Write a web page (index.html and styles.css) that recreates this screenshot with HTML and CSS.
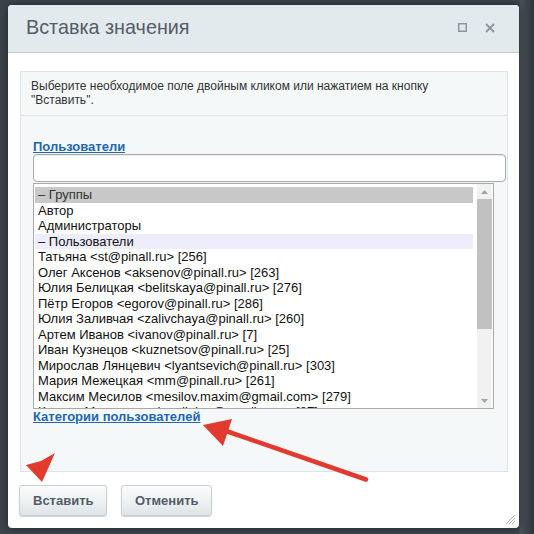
FILE: index.html
```html
<!DOCTYPE html>
<html lang="ru">
<head>
<meta charset="utf-8">
<title>Вставка значения</title>
<link rel="stylesheet" href="styles.css">
</head>
<body>
<div class="page">
  <div class="dialog">
    <div class="head">
      <span class="title">Вставка значения</span>
      <span class="tools">
        <svg class="tool" width="9" height="9" viewBox="0 0 9 9"><rect x="0.75" y="0.75" width="7.5" height="7.5" fill="none" stroke="#8c969e" stroke-width="1.5"/></svg>
        <svg class="tool" width="10" height="10" viewBox="0 0 10 10"><path d="M1 1L9 9M9 1L1 9" stroke="#8c969e" stroke-width="1.8"/></svg>
      </span>
    </div>
    <div class="body">
      <div class="panel">
        <div class="hint">Выберите необходимое поле двойным кликом или нажатием на кнопку<br>"Вставить".</div>
        <div class="fields">
          <a class="link" href="#">Пользователи</a>
          <input class="search" type="text">
          <div class="listbox">
            <div class="opts">
              <div class="opt sel">– Группы</div>
              <div class="opt">Автор</div>
              <div class="opt">Администраторы</div>
              <div class="opt grp">– Пользователи</div>
              <div class="opt">Татьяна &lt;st@pinall.ru&gt; [256]</div>
              <div class="opt">Олег Аксенов &lt;aksenov@pinall.ru&gt; [263]</div>
              <div class="opt">Юлия Белицкая &lt;belitskaya@pinall.ru&gt; [276]</div>
              <div class="opt">Пётр Егоров &lt;egorov@pinall.ru&gt; [286]</div>
              <div class="opt">Юлия Заливчая &lt;zalivchaya@pinall.ru&gt; [260]</div>
              <div class="opt">Артем Иванов &lt;ivanov@pinall.ru&gt; [7]</div>
              <div class="opt">Иван Кузнецов &lt;kuznetsov@pinall.ru&gt; [25]</div>
              <div class="opt">Мирослав Лянцевич &lt;lyantsevich@pinall.ru&gt; [303]</div>
              <div class="opt">Мария Межецкая &lt;mm@pinall.ru&gt; [261]</div>
              <div class="opt">Максим Месилов &lt;mesilov.maxim@gmail.com&gt; [279]</div>
              <div class="opt">Ксения Малинина &lt;kmalinina@gmail.com&gt; [87]</div>
            </div>
            <div class="sbar">
              <div class="sbtn"><svg width="7" height="4" viewBox="0 0 7 4"><path d="M0 4L3.5 0L7 4Z" fill="#a3a3a3"/></svg></div>
              <div class="strack"><div class="thumb"></div></div>
              <div class="sbtn"><svg width="7" height="4" viewBox="0 0 7 4"><path d="M0 0L3.5 4L7 0Z" fill="#a3a3a3"/></svg></div>
            </div>
          </div>
          <a class="link" href="#">Категории пользователей</a>
        </div>
      </div>
      <div class="buttons">
        <button class="btn">Вставить</button>
        <button class="btn">Отменить</button>
      </div>
    </div>
    <svg class="grip" width="11" height="11" viewBox="0 0 11 11"><path d="M10 1L1 10M10 4L4 10M10 7L7 10" stroke="#b0b6ba" stroke-width="1"/></svg>
  </div>
  <svg class="arrows" width="534" height="534" viewBox="0 0 534 534">
    <path d="M366 479.5L226 431" stroke="#e23a2f" stroke-width="4.5" stroke-linecap="round"/>
    <path d="M203 425L232 419L228 431L223 446Z" fill="#e23a2f"/>
    <path d="M42 482L26 465L41 461L55 453Z" fill="#e23a2f"/>
  </svg>
</div>
</body>
</html>
```
FILE: styles.css
```css
* { box-sizing: border-box; }
html, body { margin: 0; padding: 0; }
body {
  width: 534px;
  height: 534px;
  overflow: hidden;
  font-family: "Liberation Sans", Arial, sans-serif;
  background: linear-gradient(to right, #3d444c 0, #3d444c 519px, #4b535c 520px, #2f353b 534px);
}
.page {
  position: relative;
  width: 534px;
  height: 534px;
  padding: 5px 0 0 8px;
}
.dialog {
  position: relative;
  width: 511px;
  height: 523px;
  background: #fff;
  border-radius: 4px;
  box-shadow: 0 0 10px rgba(0, 0, 0, 0.45);
  display: flex;
  flex-direction: column;
}
.head {
  height: 48px;
  background: #e3eaed;
  border-bottom: 1px solid #c1cacf;
  border-radius: 4px 4px 0 0;
  display: flex;
  align-items: center;
  justify-content: space-between;
  padding: 0 24px 0 18px;
}
.title {
  font-size: 19.8px;
  color: #535c69;
  margin-top: -2px;
}
.tools {
  display: flex;
  align-items: center;
  gap: 18px;
  margin-top: -2px;
}
.tool { display: block; }
.body {
  padding: 18px 12px 0 11px;
  display: flex;
  flex-direction: column;
}
.panel {
  width: 488px;
  height: 401px;
  margin-left: 1px;
  background: #f5f8f9;
  border: 1px solid #dde5e9;
}
.hint {
  font-size: 12px;
  line-height: 14px;
  color: #333;
  padding: 7px 10px 8px 10px;
  border-bottom: 1px solid #dfe7ea;
}
.fields {
  padding: 23px 0 0 12px;
  display: flex;
  flex-direction: column;
  align-items: flex-start;
}
.link {
  font-size: 13px;
  font-weight: bold;
  line-height: 15px;
  color: #2067b0;
  text-decoration: underline;
}
.search {
  display: block;
  width: 473px;
  height: 28px;
  margin: 0;
  border: 1px solid #a3a9ae;
  border-radius: 4px;
  background: #fff;
  box-shadow: inset 0 1px 1px rgba(0, 0, 0, 0.08);
}
.listbox {
  width: 461px;
  height: 226px;
  margin-top: 1px;
  border: 1px solid #a9a9a9;
  background: #fff;
  display: flex;
  overflow: hidden;
}
.opts {
  width: 438px;
  margin: 3px 0 0 1px;
  overflow: hidden;
}
.opt {
  height: 15.5px;
  line-height: 15.5px;
  font-size: 13px;
  color: #111;
  padding-left: 3px;
  white-space: nowrap;
}
.opt.sel { background: #c8c8c8; color: #333; }
.opt.grp { background: #eeedfb; }
.sbar {
  margin-left: 4px;
  width: 15px;
  display: flex;
  flex-direction: column;
  background: #f1f1f1;
}
.sbtn {
  height: 15px;
  display: flex;
  align-items: center;
  justify-content: center;
}
.strack { flex: 1; }
.thumb {
  width: 15px;
  height: 130px;
  background: #c1c1c1;
}
.buttons {
  display: flex;
  gap: 14px;
  margin-top: 13px;
}
.btn {
  height: 31px;
  padding: 0 13px;
  font-family: "Liberation Sans", Arial, sans-serif;
  font-size: 13px;
  font-weight: bold;
  color: #535c69;
  border: 1px solid #c9d0d4;
  border-radius: 3px;
  background: linear-gradient(to bottom, #fbfcfc 0%, #eef2f3 50%, #dde4e7 100%);
  box-shadow: 0 1px 1px rgba(0, 0, 0, 0.18);
}
.btn:first-child { width: 88px; }
.btn:last-child { width: 91px; }
.grip {
  position: absolute;
  right: 3px;
  bottom: 3px;
}
.arrows {
  position: absolute;
  left: 0;
  top: 0;
  pointer-events: none;
}
```
